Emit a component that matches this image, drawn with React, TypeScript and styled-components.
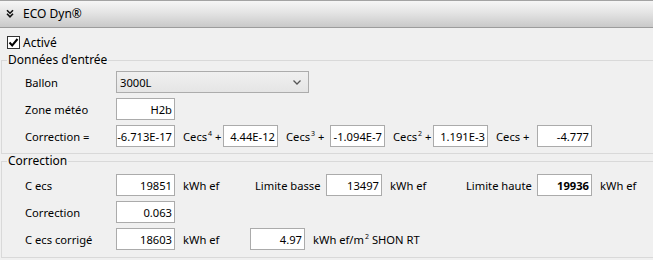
import React from "react";
import styled, { createGlobalStyle } from "styled-components";

const GlobalStyle = createGlobalStyle`
  html, body {
    margin: 0;
    padding: 0;
    background: #f0f0f0;
    overflow: hidden;
  }
  body {
    font-family: "Segoe UI", "Noto Sans", sans-serif;
    font-size: 11.2px;
    color: #000;
  }
  * {
    box-sizing: border-box;
  }
`;

const Page = styled.div`
  width: 653px;
  height: 260px;
  overflow: hidden;
`;

const Header = styled.div`
  height: 28px;
  display: flex;
  align-items: center;
  gap: 9px;
  padding: 0 0 1px 6px;
  border-top: 1px solid #a3a3a3;
  border-bottom: 1px solid #9c9c9c;
  background: linear-gradient(#f6f6f6, #e4e4e4 45%, #c9c9c9);
  font-size: 12px;
`;

const CheckRow = styled.label`
  display: flex;
  align-items: center;
  gap: 3px;
  height: 17px;
  margin: 6px 0 2px 7px;
  font-size: 12px;
`;

const Box = styled.span`
  width: 13px;
  height: 13px;
  border: 1px solid #333;
  background: #fff;
  display: flex;
  align-items: center;
  justify-content: center;
`;

const Group = styled.fieldset`
  margin: 0 -4px 0 1px;
  padding: 0;
  border: 1px solid #d9d9d9;
`;

const Legend = styled.legend`
  padding: 0 1px;
  margin-left: 5px;
  line-height: 14px;
  font-size: 12px;
`;

const Body = styled.div<{ $pad: string }>`
  padding: ${(p) => p.$pad};
  display: flex;
  flex-direction: column;
  gap: 5px;
`;

const Row = styled.div`
  display: flex;
  align-items: center;
  height: 22px;
`;

const Label = styled.span<{ $w: number }>`
  width: ${(p) => p.$w}px;
  flex: none;
  white-space: nowrap;
`;

const Field = styled.div<{ $w: number; $bold?: boolean }>`
  width: ${(p) => p.$w}px;
  height: 22px;
  flex: none;
  background: #fff;
  border: 1px solid #ababab;
  display: flex;
  align-items: center;
  justify-content: flex-end;
  padding-right: 2px;
  font-weight: ${(p) => (p.$bold ? 700 : 400)};
  white-space: nowrap;
`;

const Select = styled.div`
  width: 193px;
  height: 22px;
  border: 1px solid #acacac;
  background: linear-gradient(#f0f0f0, #e5e5e5);
  display: flex;
  align-items: center;
  justify-content: space-between;
  padding: 0 7px 0 3px;
`;

const Term = styled.span<{ $w: number }>`
  width: ${(p) => p.$w}px;
  flex: none;
  padding-left: 8px;
  white-space: nowrap;
`;

const Sup = styled.sup`
  font-size: 7px;
  vertical-align: 5px;
  line-height: 0;
  margin-left: 1px;
`;

const Chevrons = () => (
  <svg width="8" height="9" viewBox="0 0 8 9">
    <path d="M1 1.2 L4 4.2 L7 1.2 M1 4.8 L4 7.8 L7 4.8" fill="none" stroke="#111" strokeWidth="1.6" />
  </svg>
);

export default function App() {
  return (
    <Page>
      <GlobalStyle />
      <Header>
        <Chevrons />
        <span>ECO Dyn®</span>
      </Header>

      <CheckRow>
        <Box>
          <svg width="11" height="11" viewBox="0 0 11 11">
            <path d="M1.5 5.5 L4.2 8.4 L9.5 2" fill="none" stroke="#000" strokeWidth="2" />
          </svg>
        </Box>
        Activé
      </CheckRow>

      <Group>
        <Legend>Données d'entrée</Legend>
        <Body $pad="4px 0 6px 23px">
          <Row>
            <Label $w={91}>Ballon</Label>
            <Select>
              <span>3000L</span>
              <svg width="8" height="5" viewBox="0 0 8 5">
                <path d="M0.5 0.5 L4 4 L7.5 0.5" fill="none" stroke="#555" strokeWidth="1.3" />
              </svg>
            </Select>
          </Row>
          <Row>
            <Label $w={91}>Zone météo</Label>
            <Field $w={59}>H2b</Field>
          </Row>
          <Row>
            <Label $w={91}>Correction =</Label>
            <Field $w={59}>-6.713E-17</Field>
            <Term $w={48}>Cecs<Sup>4</Sup> +</Term>
            <Field $w={55}>4.44E-12</Field>
            <Term $w={52}>Cecs<Sup>3</Sup> +</Term>
            <Field $w={55}>-1.094E-7</Field>
            <Term $w={48}>Cecs<Sup>2</Sup> +</Term>
            <Field $w={55}>1.191E-3</Field>
            <Term $w={49}>Cecs +</Term>
            <Field $w={55}>-4.777</Field>
          </Row>
        </Body>
      </Group>

      <Group>
        <Legend>Correction</Legend>
        <Body $pad="6px 0 7px 23px">
          <Row>
            <Label $w={91}>C ecs</Label>
            <Field $w={59}>19851</Field>
            <Term $w={80}>kWh ef</Term>
            <Label $w={71}>Limite basse</Label>
            <Field $w={56}>13497</Field>
            <Term $w={84}>kWh ef</Term>
            <Label $w={71}>Limite haute</Label>
            <Field $w={55} $bold>19936</Field>
            <Term $w={60}>kWh ef</Term>
          </Row>
          <Row>
            <Label $w={91}>Correction</Label>
            <Field $w={59}>0.063</Field>
          </Row>
          <Row>
            <Label $w={91}>C ecs corrigé</Label>
            <Field $w={59}>18603</Field>
            <Term $w={75}>kWh ef</Term>
            <Field $w={55}>4.97</Field>
            <Term $w={140}>
              kWh ef/m<Sup>2</Sup> SHON RT
            </Term>
          </Row>
        </Body>
      </Group>
    </Page>
  );
}
